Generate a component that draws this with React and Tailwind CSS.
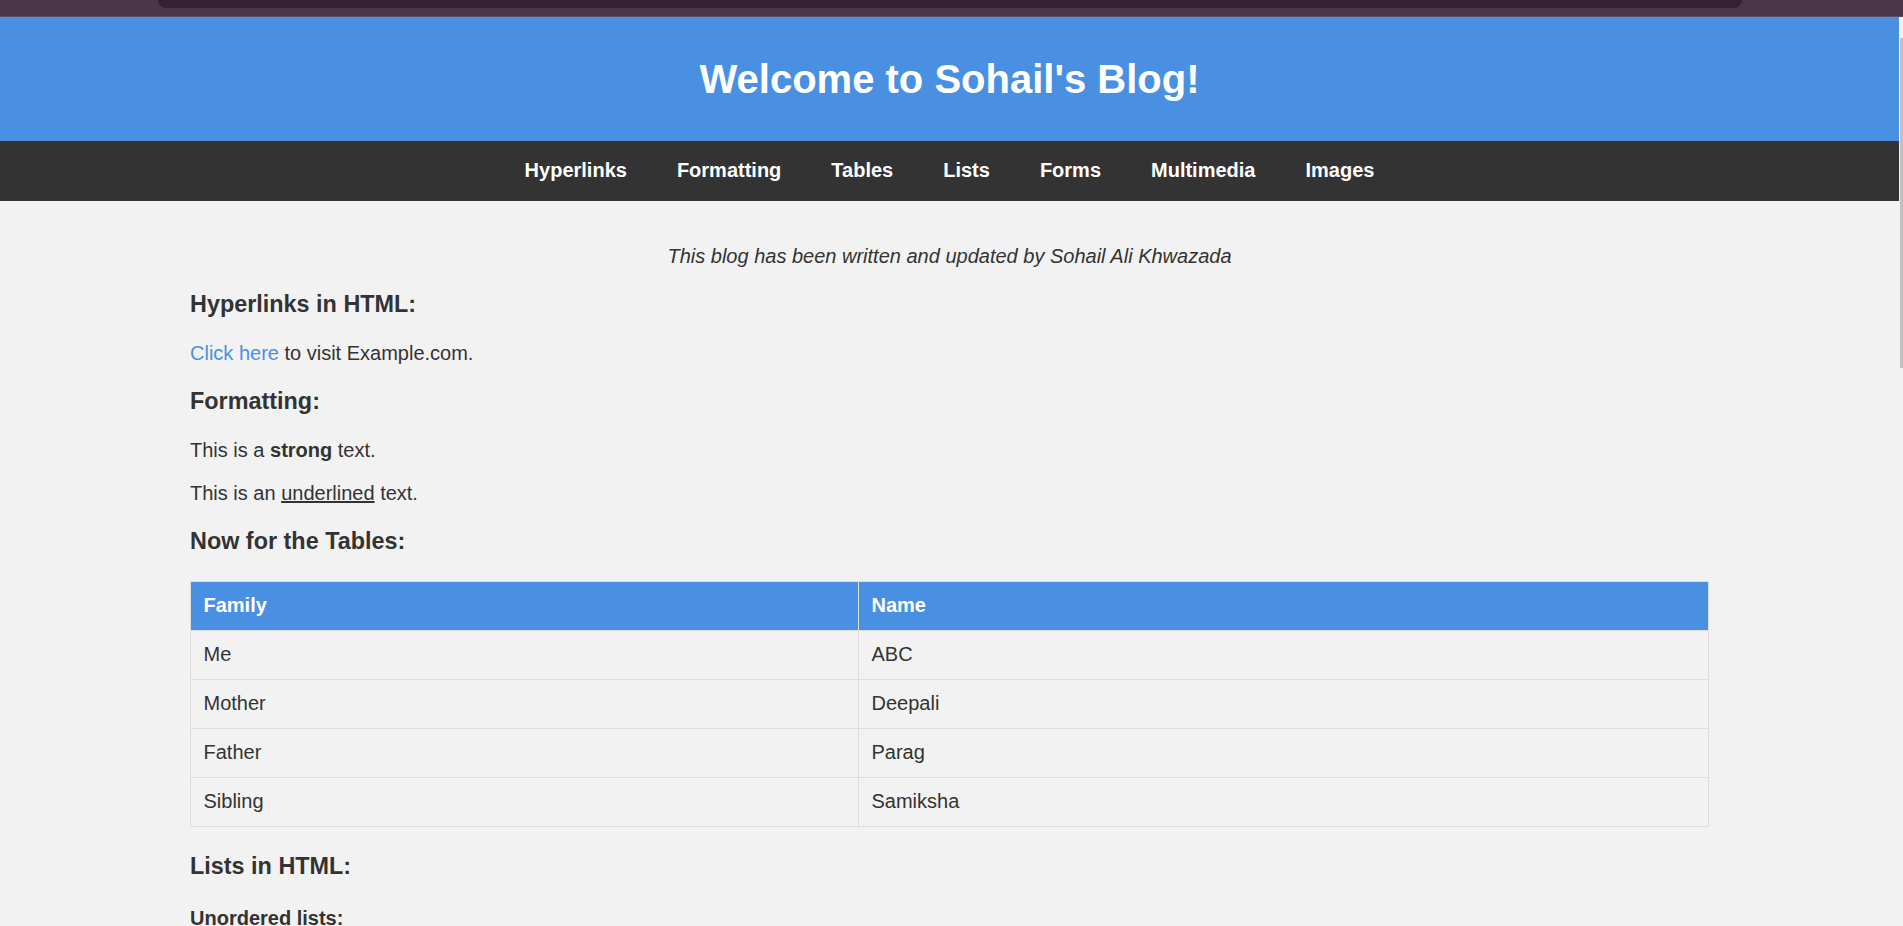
import React from "react";

const navItems = ["Hyperlinks", "Formatting", "Tables", "Lists", "Forms", "Multimedia", "Images"];
const rows = [
  ["Me", "ABC"],
  ["Mother", "Deepali"],
  ["Father", "Parag"],
  ["Sibling", "Samiksha"],
];

export default function App() {
  return (
    <div className="h-[926px] overflow-hidden flex flex-col bg-[#f2f2f2] text-[#333333] font-['Liberation_Sans',Arial,sans-serif]">
      {/* top strip */}
      <div className="relative h-[17px] shrink-0 bg-[#4b3548] border-b border-[#5e4f5d]">
        <div className="absolute left-[158px] top-0 h-[8px] w-[1584px] rounded-b-[9px] bg-[#34202f]" />
      </div>

      <div className="flex flex-1 min-h-0">
        <div className="flex-1 min-w-0 overflow-hidden">
          <header className="h-[124px] flex items-center justify-center bg-[#4a90e2]">
            <h1 className="text-[40px] leading-[46px] font-bold text-white">Welcome to Sohail's Blog!</h1>
          </header>

          <nav className="h-[60px] pb-[2px] bg-[#333333] flex items-center justify-center gap-[50px]">
            {navItems.map((n) => (
              <a key={n} className="text-[20px] leading-[23px] font-bold text-white">
                {n}
              </a>
            ))}
          </nav>

          <main className="pt-[24px]">
            <p className="my-[20px] text-center italic text-[20px] leading-[23px]">
              This blog has been written and updated by Sohail Ali Khwazada
            </p>

            <section className="mx-[190px]">
              <h3 className="my-[23.4px] text-[23.4px] leading-[27px] font-bold">Hyperlinks in HTML:</h3>
              <p className="my-[20px] text-[20px] leading-[23px]">
                <a className="text-[#4a90e2]">Click here</a> to visit Example.com.
              </p>

              <h3 className="my-[23.4px] text-[23.4px] leading-[27px] font-bold">Formatting:</h3>
              <p className="my-[20px] text-[20px] leading-[23px]">
                This is a <strong className="font-bold">strong</strong> text.
              </p>
              <p className="my-[20px] text-[20px] leading-[23px]">
                This is an <u className="underline">underlined</u> text.
              </p>

              <h3 className="my-[23.4px] text-[23.4px] leading-[27px] font-bold">Now for the Tables:</h3>

              <table className="my-[26px] w-full table-fixed border-collapse border border-[#dddddd] text-[20px] leading-[23px]">
                <colgroup>
                  <col className="w-[668px]" />
                  <col />
                </colgroup>
                <thead>
                  <tr className="bg-[#4a90e2]">
                    <th className="border border-[#dddddd] p-[12.5px] text-left font-bold text-white">Family</th>
                    <th className="border border-[#dddddd] p-[12.5px] text-left font-bold text-white">Name</th>
                  </tr>
                </thead>
                <tbody>
                  {rows.map(([a, b]) => (
                    <tr key={a}>
                      <td className="border border-[#dddddd] p-[12.5px]">{a}</td>
                      <td className="border border-[#dddddd] p-[12.5px]">{b}</td>
                    </tr>
                  ))}
                </tbody>
              </table>

              <h3 className="my-[23.4px] text-[23.4px] leading-[27px] font-bold">Lists in HTML:</h3>
              <h4 className="my-[26.6px] text-[20px] leading-[23px] font-bold">Unordered lists:</h4>
            </section>
          </main>
        </div>

        {/* scrollbar */}
        <div className="w-[4px] shrink-0 bg-[#f1f1f1] pt-[21px]">
          <div className="ml-[1px] h-[330px] bg-[#c1c1c1]" />
        </div>
      </div>
    </div>
  );
}
